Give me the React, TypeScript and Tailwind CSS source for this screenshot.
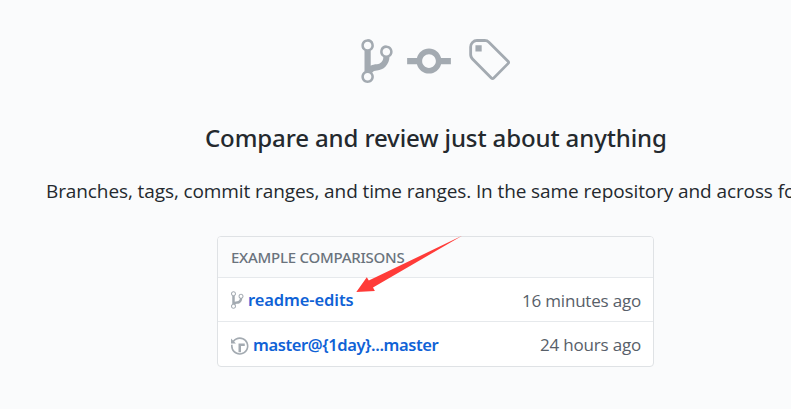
const BRANCH =
  "M10 5c0-1.11-.89-2-2-2a1.993 1.993 0 0 0-1 3.72v.3c-.02.52-.23.98-.63 1.38-.4.4-.86.61-1.38.63-.83.02-1.48.16-2 .45V4.72a1.993 1.993 0 0 0-1-3.72C.88 1 0 1.89 0 3a2 2 0 0 0 1 1.72v6.56c-.59.35-1 .99-1 1.72 0 1.11.89 2 2 2 1.11 0 2-.89 2-2 0-.53-.2-1-.53-1.36.09-.06.48-.41.59-.47.25-.11.56-.17.94-.17 1.05-.05 1.95-.45 2.75-1.25S8.95 7.77 9 6.73h-.02C9.59 6.37 10 5.73 10 5zM2 1.8c.66 0 1.2.55 1.2 1.2 0 .65-.55 1.2-1.2 1.2C1.35 4.2.8 3.65.8 3c0-.65.55-1.2 1.2-1.2zm0 12.41c-.66 0-1.2-.55-1.2-1.2 0-.65.55-1.2 1.2-1.2.65 0 1.2.55 1.2 1.2 0 .65-.55 1.2-1.2 1.2zm6-8c-.66 0-1.2-.55-1.2-1.2 0-.65.55-1.2 1.2-1.2.65 0 1.2.55 1.2 1.2 0 .65-.55 1.2-1.2 1.2z";
const COMMIT =
  "M10.86 7c-.45-1.72-2-3-3.86-3-1.86 0-3.41 1.28-3.86 3H0v2h3.14c.45 1.72 2 3 3.86 3 1.86 0 3.41-1.28 3.86-3H14V7h-3.14zM7 10.2c-1.22 0-2.2-.98-2.2-2.2 0-1.22.98-2.2 2.2-2.2 1.22 0 2.2.98 2.2 2.2 0 1.22-.98 2.2-2.2 2.2z";
const TAG =
  "M7.685 1.72a2.49 2.49 0 0 0-1.76-.726H3.48A2.5 2.5 0 0 0 .994 3.48v2.456c0 .656.269 1.292.726 1.76l6.024 6.024a.99.99 0 0 0 1.402 0l4.563-4.563a.99.99 0 0 0 0-1.402L7.685 1.72zM2.366 7.048a1.54 1.54 0 0 1-.467-1.123V3.48c0-.874.716-1.58 1.58-1.58h2.456c.418 0 .825.159 1.123.467l6.104 6.094-4.702 4.702-6.094-6.115zm.626-4.066h1.989v1.989H2.982V2.982z";
const HISTORY =
  "M8 13H6V6h5v2H8v5zM7 1C4.81 1 2.87 2.02 1.59 3.59L0 2v4h4L2.5 4.5C3.55 3.17 5.17 2.3 7 2.3c3.14 0 5.7 2.56 5.7 5.7s-2.56 5.7-5.7 5.7A5.71 5.71 0 0 1 1.3 8c0-.34.03-.67.09-1H.08C.03 7.33 0 7.66 0 8c0 3.86 3.14 7 7 7s7-3.14 7-7-3.14-7-7-7z";

function Icon({ d, units, className }: { d: string; units: number; className: string }) {
  return (
    <svg viewBox={`0 0 ${units} 16`} className={`shrink-0 fill-current ${className}`} aria-hidden="true">
      <path fillRule="evenodd" d={d} />
    </svg>
  );
}

export default function App() {
  return (
    <main className="h-[409px] w-[791px] overflow-hidden bg-[#fafbfc] pt-9 font-['Noto_Sans','Open_Sans',sans-serif] text-[#24292e]">
      <div className="flex h-[50px] pl-[361px] text-[#a3aab1]">
        <Icon d={BRANCH} units={10} className="h-[50px] w-8" />
        <Icon d={COMMIT} units={14} className="ml-[14px] h-[50px] w-11" />
        <Icon d={TAG} units={14} className="ml-[15px] h-[50px] w-11" />
      </div>

      <h1 className="mt-[33px] pl-[205px] text-[24px] leading-[37px] font-medium tracking-[-0.12px] whitespace-nowrap">
        <span>Compare and review just about anything</span>
      </h1>
      <p className="mt-5 pl-[46px] font-['Open_Sans','Noto_Sans',sans-serif] text-[19px] leading-[30px] tracking-[-0.1px] whitespace-nowrap">
        <span>Branches, tags, commit ranges, and time ranges. In the same repository and across fo</span>
      </p>

      <section className="relative mt-[30px] ml-[217px] h-[131px] w-[437px] rounded-[4px] border border-[#dfe2e5] bg-white">
        <h2 className="flex h-[41px] items-center rounded-t-[3px] border-b border-[#e6e9ec] bg-[#fafbfc] pl-[13px] text-[15px] font-medium tracking-[-0.25px] text-[#6a737d]">
          <span>EXAMPLE COMPARISONS</span>
        </h2>
        <div className="flex h-11 items-center border-b border-[#e6e9ec] pr-3 pl-[13px] text-[16.5px]">
          <Icon d={BRANCH} units={10} className="mt-px h-5 w-[12.5px] text-[#a3aab1]" />
          <a className="mt-0.5 ml-[4.5px] font-semibold tracking-[-0.1px] text-[#0f62d6]">readme-edits</a>
          <span className="mt-0.5 ml-auto font-['Open_Sans','Noto_Sans',sans-serif] text-[17px] tracking-[-0.2px] text-[#586069]">16 minutes ago</span>
        </div>
        <div className="flex h-11 items-center pr-3 pl-[13px] text-[16.5px]">
          <Icon d={HISTORY} units={14} className="mt-[3px] h-5 w-[17.5px] text-[#a3aab1]" />
          <a className="mt-0.5 ml-[4.5px] font-semibold tracking-[-0.4px] text-[#0f62d6]">master@{"{1day}"}...master</a>
          <span className="mt-0.5 ml-auto font-['Open_Sans','Noto_Sans',sans-serif] text-[17px] tracking-[-0.2px] text-[#586069]">24 hours ago</span>
        </div>
        <svg
          viewBox="0 0 106 57"
          className="absolute top-[-1px] left-[138px] h-[57px] w-[106px] fill-[#ff3b38]"
          aria-hidden="true"
        >
          <path d="M106.5 -0.5 L12.8 44.6 L10.8 41.3 L0.3 56 L18.9 55 L17 51.5Z" />
        </svg>
      </section>
    </main>
  );
}
